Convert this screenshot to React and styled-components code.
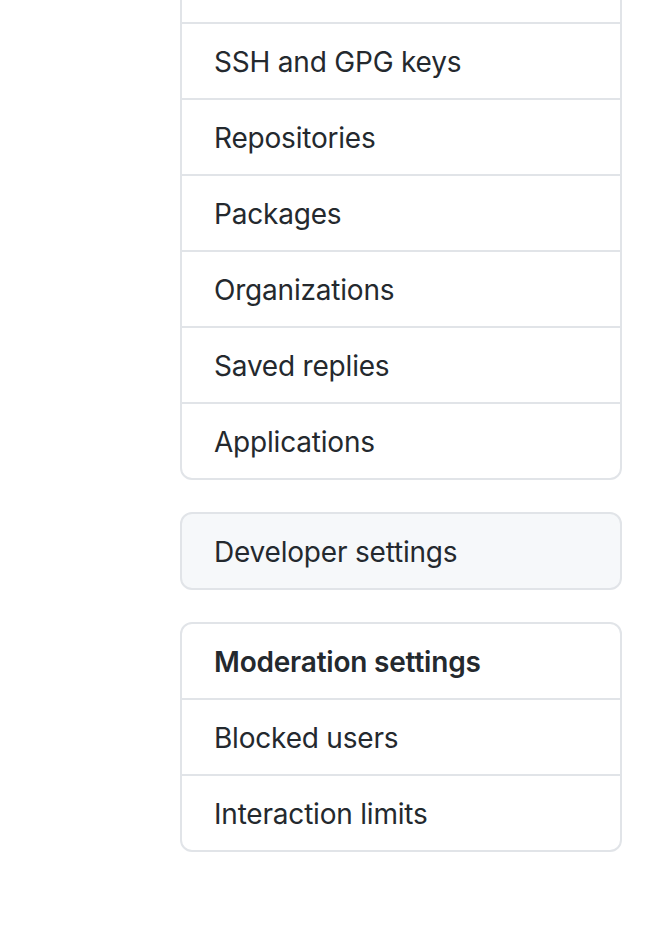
import React from "react";
import styled, { createGlobalStyle } from "styled-components";

const Global = createGlobalStyle`
  html, body { margin: 0; padding: 0; background: #ffffff; }
  body {
    font-family: Inter, "Noto Sans", "Liberation Sans", sans-serif;
    color: #24292e;
    overflow: hidden;
  }
`;

const Page = styled.div`
  width: 666px;
  height: 940px;
  overflow: hidden;
`;

const Sidebar = styled.nav`
  margin: -54px 0 0 180px;
  width: 442px;
  display: flex;
  flex-direction: column;
  gap: 32px;
`;

const Menu = styled.div`
  border: 2px solid #e1e4e8;
  border-radius: 12px;
  overflow: hidden;
  background: ${(p) => (p.$muted ? "#f6f8fa" : "#ffffff")};
  display: flex;
  flex-direction: column;
`;

const Item = styled.div`
  padding: 17px 32px 15px;
  min-height: 42px;
  font-size: 28px;
  line-height: 42px;
  letter-spacing: -0.2px;
  font-weight: ${(p) => (p.$heading ? 600 : 400)};
  color: #24292e;
  & + & {
    border-top: 2px solid #e1e4e8;
  }
`;

const groups = [
  {
    lead: true,
    items: [
      "SSH and GPG keys",
      "Repositories",
      "Packages",
      "Organizations",
      "Saved replies",
      "Applications",
    ],
  },
  { muted: true, items: ["Developer settings"] },
  { heading: "Moderation settings", items: ["Blocked users", "Interaction limits"] },
];

export default function App() {
  return (
    <Page>
      <Global />
      <Sidebar>
        {groups.map((g, i) => (
          <Menu key={i} $muted={g.muted}>
            {g.lead && <Item aria-hidden="true" />}
            {g.heading && <Item $heading>{g.heading}</Item>}
            {g.items.map((t) => (
              <Item key={t}>{t}</Item>
            ))}
          </Menu>
        ))}
      </Sidebar>
    </Page>
  );
}
